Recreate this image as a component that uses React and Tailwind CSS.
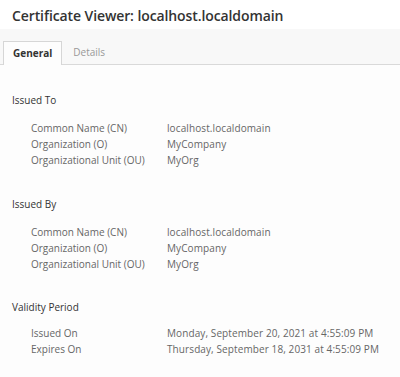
export default function App() {
  const sections = [
    {
      title: 'Issued To',
      gap: 'mb-[28px]',
      rows: [
        ['Common Name (CN)', 'localhost.localdomain'],
        ['Organization (O)', 'MyCompany'],
        ['Organizational Unit (OU)', 'MyOrg'],
      ],
    },
    {
      title: 'Issued By',
      gap: 'mb-[27px]',
      rows: [
        ['Common Name (CN)', 'localhost.localdomain'],
        ['Organization (O)', 'MyCompany'],
        ['Organizational Unit (OU)', 'MyOrg'],
      ],
    },
    {
      title: 'Validity Period',
      gap: '',
      rows: [
        ['Issued On', 'Monday, September 20, 2021 at 4:55:09 PM'],
        ['Expires On', 'Thursday, September 18, 2031 at 4:55:09 PM'],
      ],
    },
  ];

  return (
    <div className="w-[400px] h-[377px] bg-[#fdfdfd] overflow-hidden font-['Open_Sans',sans-serif]">
      <div className="h-[29px] px-3 pt-[5px] bg-white">
        <h1 className="text-[14px] font-semibold text-[#333] tracking-[-0.1px]">Certificate Viewer: localhost.localdomain</h1>
      </div>

      <div className="flex items-end h-[36px] px-[3px] bg-[#f8f8f8] border-b border-[#d9d9d9]">
        <div className="h-[24px] px-[9px] flex items-center bg-[#fdfdfd] border border-b-0 border-[#d6d6d6] -mb-px text-[10px] font-bold text-[#333]">
          General
        </div>
        <div className="h-[24px] px-[11px] flex items-center text-[10px] text-[#999]">Details</div>
      </div>

      <div className="px-3 pt-[27px]">
        {sections.map((s, i) => (
          <div key={s.title} className={s.gap}>
            <h2 className="text-[10px] text-[#333] leading-[16px]">{s.title}</h2>
            <div className={i === 2 ? 'mt-[10px] pl-[19px]' : 'mt-[12px] pl-[19px]'}>
              {s.rows.map(([k, v]) => (
                <div key={k} className="flex text-[10px] leading-[16px] text-[#666]">
                  <span className="w-[136px] shrink-0">{k}</span>
                  <span className="whitespace-nowrap tracking-[0.1px]">{v}</span>
                </div>
              ))}
            </div>
          </div>
        ))}
      </div>
    </div>
  );
}
